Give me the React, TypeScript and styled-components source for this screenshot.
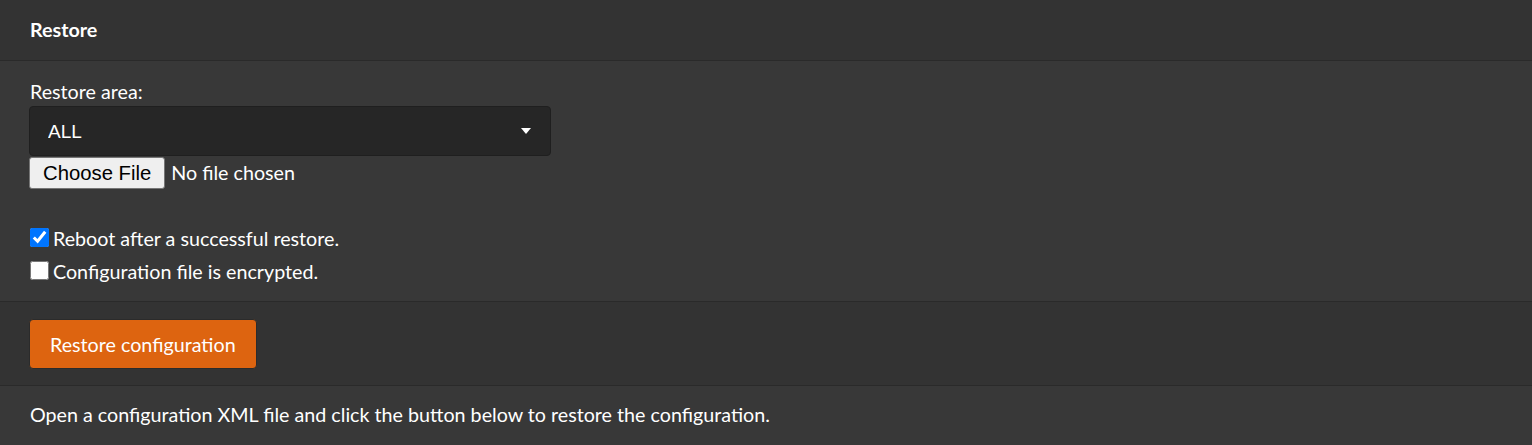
import React, { useState } from 'react';
import styled, { createGlobalStyle } from 'styled-components';

const GlobalStyle = createGlobalStyle`
  html, body {
    margin: 0;
    padding: 0;
    background: #383838;
  }
  body {
    font-family: Lato, 'Noto Sans', sans-serif;
    font-size: 19.7px;
    color: #ffffff;
  }
`;

const Panel = styled.section`
  width: 100%;
  background: #383838;
`;

const PanelHeader = styled.div`
  height: 60px;
  padding: 0 30px 1px;
  box-sizing: border-box;
  display: flex;
  align-items: center;
  background: #333333;
  border-bottom: 1px solid #2a2a2a;
  font-weight: 700;
  height: 61px;
`;

const PanelBody = styled.div`
  padding: 19px 29px 17px;
  display: flex;
  flex-direction: column;
  border-bottom: 1px solid #2a2a2a;
`;

const FieldLabel = styled.label`
  display: block;
  margin: 0 0 2px 1px;
  line-height: 24px;
`;

const SelectWrap = styled.div`
  position: relative;
  width: 522px;
`;

const Select = styled.select`
  appearance: none;
  display: block;
  width: 100%;
  height: 50px;
  padding: 0 18px;
  background: #262626;
  color: #ffffff;
  border: 1px solid #1f1f1f;
  border-radius: 4px;
  font-family: 'Liberation Sans', Arial, sans-serif;
  font-size: 19px;
  outline: none;
`;

const Caret = styled.span`
  position: absolute;
  right: 20px;
  top: 22px;
  width: 0;
  height: 0;
  border-left: 5px solid transparent;
  border-right: 5px solid transparent;
  border-top: 6px solid #ffffff;
  pointer-events: none;
`;

const FileRow = styled.label`
  display: flex;
  align-items: center;
  gap: 6px;
  margin-top: 1px;
  cursor: pointer;
`;

const HiddenInput = styled.input`
  display: none;
`;

const FileButton = styled.span`
  display: inline-flex;
  align-items: center;
  height: 32px;
  padding: 0 13px;
  background: #efefef;
  color: #000000;
  border: 1px solid #767676;
  border-radius: 3px;
  font-family: 'Liberation Sans', Arial, sans-serif;
  font-size: 20.3px;
  box-sizing: border-box;
`;

const FileName = styled.span`
  line-height: 32px;
`;

const Options = styled.div`
  display: flex;
  flex-direction: column;
  gap: 9px;
  margin-top: 38px;
`;

const CheckRow = styled.label`
  display: flex;
  align-items: center;
  gap: 4px;
  line-height: 24px;
`;

const Checkbox = styled.input`
  width: 19px;
  height: 19px;
  margin: 0 0 3px 1px;
  accent-color: #0075ff;
`;

const ActionBar = styled.div`
  padding: 17px 29px 16px;
  background: #333333;
  border-bottom: 1px solid #2a2a2a;
`;

const PrimaryButton = styled.button`
  display: block;
  height: 50px;
  padding: 0 20px;
  background: #dd6410;
  color: #ffffff;
  border: 1px solid #2b2b2b;
  border-radius: 4px;
  font-family: inherit;
  font-size: 19.7px;
  cursor: pointer;
`;

const Footer = styled.div`
  padding: 17px 30px 18px;
  line-height: 24px;
`;

export default function App() {
  const [reboot, setReboot] = useState(true);
  const [encrypted, setEncrypted] = useState(false);
  const [file, setFile] = useState<string | null>(null);

  return (
    <>
      <GlobalStyle />
      <Panel>
        <PanelHeader>Restore</PanelHeader>
        <PanelBody>
          <FieldLabel htmlFor="area">Restore area:</FieldLabel>
          <SelectWrap>
            <Select id="area" defaultValue="ALL">
              <option value="ALL">ALL</option>
              <option value="system">System</option>
              <option value="interfaces">Interfaces</option>
            </Select>
            <Caret />
          </SelectWrap>
          <FileRow>
            <HiddenInput
              type="file"
              onChange={e => setFile(e.target.files?.[0]?.name ?? null)}
            />
            <FileButton>Choose File</FileButton>
            <FileName>{file ?? 'No file chosen'}</FileName>
          </FileRow>
          <Options>
            <CheckRow>
              <Checkbox type="checkbox" checked={reboot} onChange={e => setReboot(e.target.checked)} />
              Reboot after a successful restore.
            </CheckRow>
            <CheckRow>
              <Checkbox type="checkbox" checked={encrypted} onChange={e => setEncrypted(e.target.checked)} />
              Configuration file is encrypted.
            </CheckRow>
          </Options>
        </PanelBody>
        <ActionBar>
          <PrimaryButton>Restore configuration</PrimaryButton>
        </ActionBar>
        <Footer>
          Open a configuration XML file and click the button below to restore the configuration.
        </Footer>
      </Panel>
    </>
  );
}
